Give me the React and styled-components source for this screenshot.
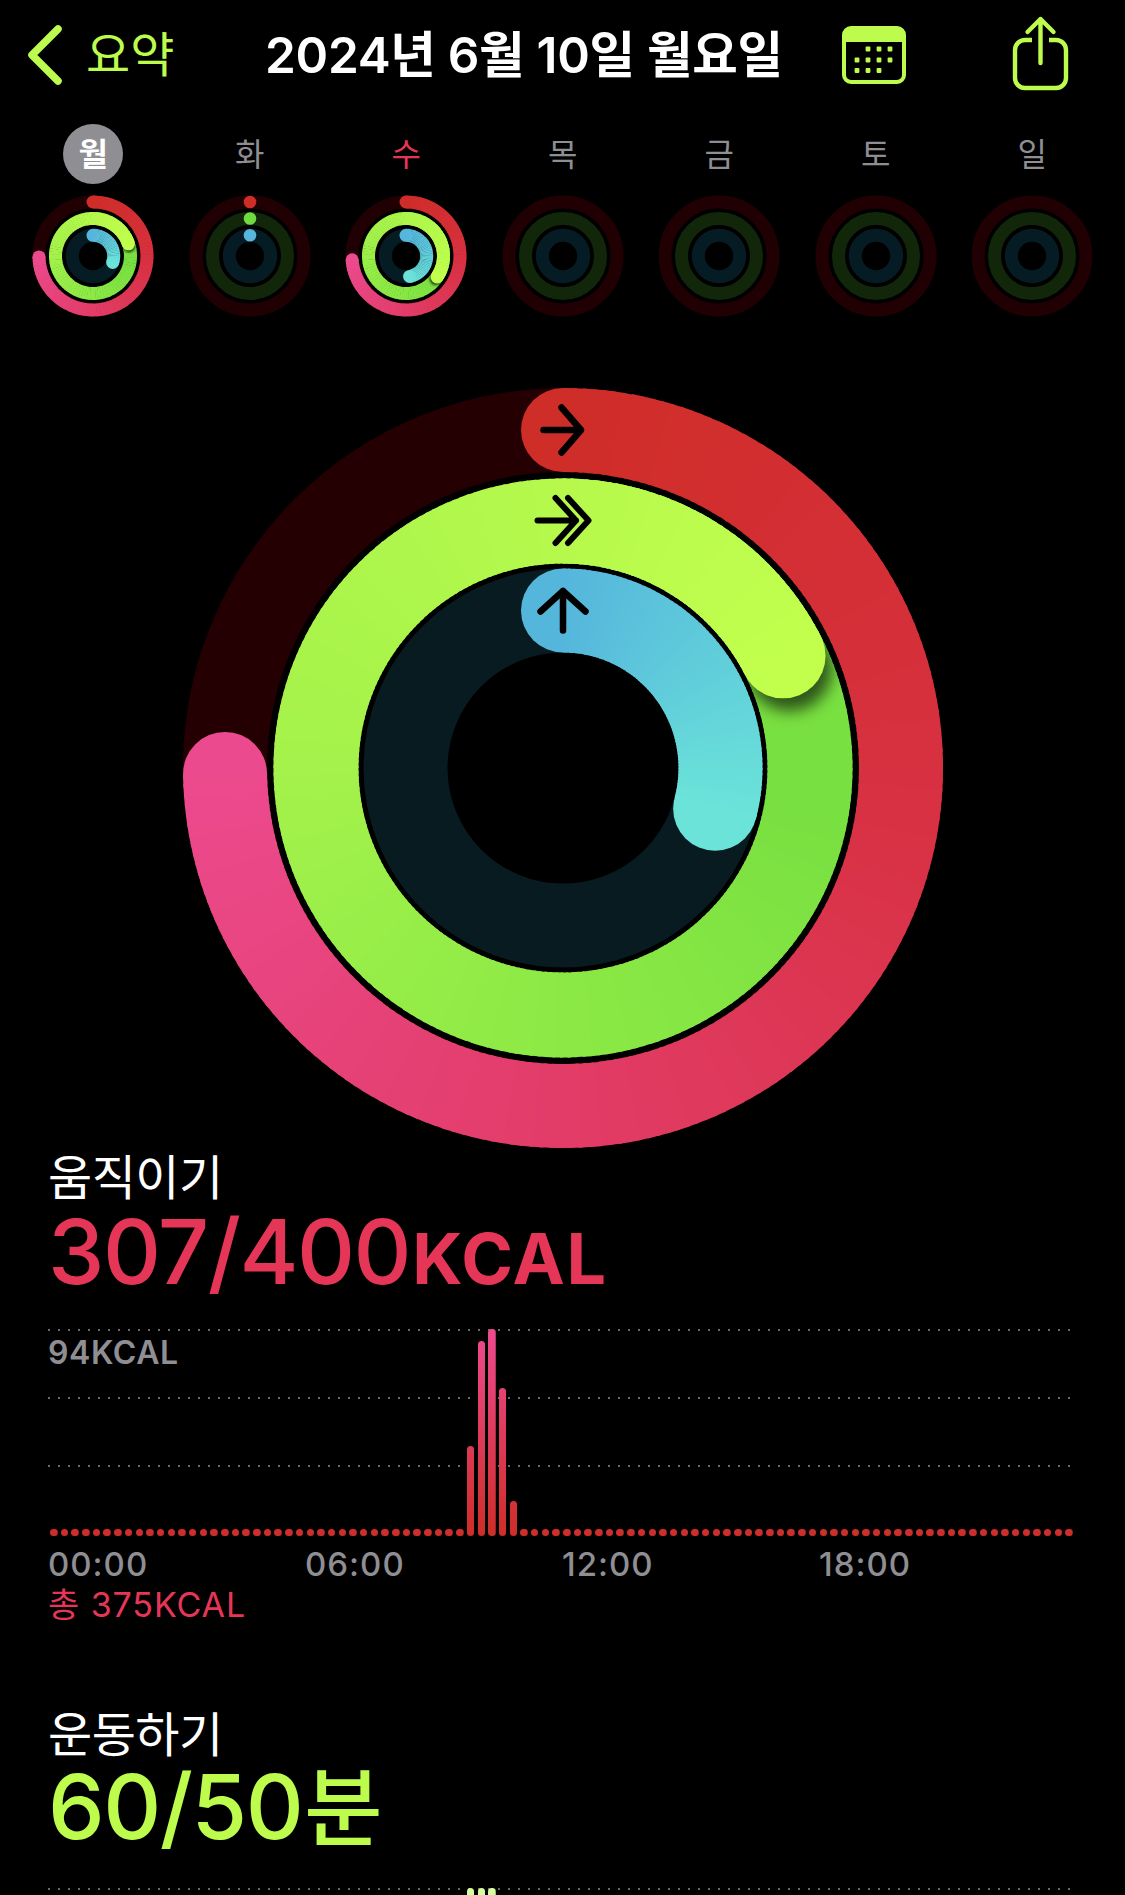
import React, { useId } from "react";
import styled, { createGlobalStyle } from "styled-components";

const LIME = "#bdfb4d";
const RED = "#e63658";
const GRAY = "#8e8e93";

const RED_STOPS = [[0, "#cf2d28"], [0.33, "#d7303f"], [0.67, "#e23c68"], [1, "#ec4a8e"]];
const GREEN_STOPS = [[0.236, "#79e041"], [0.426, "#8ce945"], [0.638, "#a4f24b"], [0.851, "#b6f94c"], [1, "#c2ff4d"]];
const BLUE_STOPS = [[0, "#55b6dc"], [1, "#6be3d9"]];

const GlobalStyle = createGlobalStyle`
  html, body {
    margin: 0;
    padding: 0;
    background: #000;
  }
  body {
    font-family: Inter, "Noto Sans CJK KR", sans-serif;
  }
`;

const hexToRgb = (hex) => [1, 3, 5].map((i) => parseInt(hex.slice(i, i + 2), 16));

function colorAt(stops, frac) {
  if (frac <= stops[0][0]) return stops[0][1];
  for (let i = 1; i < stops.length; i++) {
    if (frac <= stops[i][0]) {
      const [f0, c0] = stops[i - 1];
      const [f1, c1] = stops[i];
      const k = (frac - f0) / (f1 - f0);
      const a = hexToRgb(c0);
      const b = hexToRgb(c1);
      return `rgb(${a.map((v, n) => Math.round(v + (b[n] - v) * k)).join(",")})`;
    }
  }
  return stops[stops.length - 1][1];
}

function polar(r, deg) {
  const rad = (deg * Math.PI) / 180;
  return [r * Math.sin(rad), -r * Math.cos(rad)];
}

function Ring({ r, w, end, track, stops, shadow }) {
  const id = useId();
  const step = r > 100 ? 1.5 : 4;
  const segments = [];
  for (let t = 0; t < end; t += step) {
    const to = Math.min(t + step + 0.6, end);
    const [x0, y0] = polar(r, t);
    const [x1, y1] = polar(r, to);
    segments.push(
      <path
        key={t}
        d={`M${x0} ${y0}A${r} ${r} 0 0 1 ${x1} ${y1}`}
        stroke={colorAt(stops, (t + step / 2) / end)}
      />
    );
  }
  const [ex, ey] = polar(r, end);
  const lap = end > 360 ? Math.floor(segments.length * ((end - 360) / end)) : 0;
  const first = segments.slice(0, segments.length - lap);
  const last = segments.slice(segments.length - lap);
  const [sx, sy] = polar(w * 0.17, end + 90);
  const endCap = <circle cx={ex} cy={ey} r={w / 2} fill={stops[stops.length - 1][1]} stroke="none" />;

  return (
    <g fill="none" strokeWidth={w}>
      <circle r={r} stroke={track} />
      <circle cx={0} cy={-r} r={w / 2} fill={stops[0][1]} stroke="none" />
      {lap > 0 && first}
      {shadow && (
        <>
          <defs>
            <filter id={`${id}b`} x="-60%" y="-60%" width="220%" height="220%">
              <feGaussianBlur stdDeviation={w * 0.09} />
            </filter>
            <mask id={`${id}m`} maskUnits="userSpaceOnUse" x={-r - w} y={-r - w} width={2 * (r + w)} height={2 * (r + w)}>
              <circle r={r} stroke="#fff" />
            </mask>
          </defs>
          <g mask={`url(#${id}m)`}>
            <circle cx={ex + sx} cy={ey + sy} r={w / 2} fill="#000" fillOpacity="0.62" stroke="none" filter={`url(#${id}b)`} />
          </g>
        </>
      )}
      {endCap}
      {lap > 0 ? last : first}
    </g>
  );
}

function BigRings() {
  return (
    <svg width="764" height="764" viewBox="-382 -382 764 764">
      <Ring r={338} w={84} end={269} track="#240003" stops={RED_STOPS} />
      <Ring r={247} w={85} end={423} track="#12260a" stops={GREEN_STOPS} shadow />
      <Ring r={157.5} w={84} end={105} track="#081b21" stops={BLUE_STOPS} />
      <g fill="none" stroke="#000" strokeWidth="6.5" strokeLinecap="round" strokeLinejoin="round">
        <path d="M-19.5 -338H18M-1.5 -360.5L18 -338L-1.5 -315.5" />
        <path d="M-25.5 -247.5H13M-7.5 -270L13 -247.5L-7.5 -225M5 -270L25.5 -247.5L5 -225" strokeWidth="6" />
        <path d="M0 -137.5V-177M-22.5 -156.5L0 -177L22.5 -156.5" />
      </g>
    </svg>
  );
}

function MiniRings({ red, green, blue }) {
  const radii = { red: 54, green: 37.5, blue: 20.7 };
  const tracks = { red: "#210003", green: "#12260a", blue: "#061c24" };
  const dots = { red: "#cf2d28", green: "#6fdb40", blue: "#56b6dc" };
  const isDots = red === 0 && green === 0 && blue === 0;
  return (
    <svg width="124" height="124" viewBox="-62 -62 124 124">
      {red ? (
        <>
          <Ring r={radii.red} w={13} end={red} track={tracks.red} stops={RED_STOPS} />
          <Ring r={radii.green} w={13} end={green} track={tracks.green} stops={GREEN_STOPS} shadow />
          <Ring r={radii.blue} w={13} end={blue} track={tracks.blue} stops={BLUE_STOPS} />
        </>
      ) : (
        Object.keys(radii).map((k) => (
          <g key={k}>
            <circle r={radii[k]} fill="none" stroke={tracks[k]} strokeWidth="13" />
            {isDots && <circle cy={-radii[k]} r="6.3" fill={dots[k]} />}
          </g>
        ))
      )}
    </svg>
  );
}

const CalendarIcon = () => (
  <svg width="64" height="58" viewBox="0 0 64 58">
    <rect x="2" y="2" width="60" height="54" rx="7" fill="none" stroke={LIME} strokeWidth="4" />
    <path d="M2 15V9a7 7 0 0 1 7-7h46a7 7 0 0 1 7 7v6z" fill={LIME} stroke={LIME} strokeWidth="2" />
    <g fill={LIME}>
      {[[26, 23], [37, 23], [48, 23], [15, 34], [26, 34], [37, 34], [48, 34], [15, 44.5], [26, 44.5], [37, 44.5]].map(([x, y]) => (
        <rect key={`${x}-${y}`} x={x - 2.4} y={y - 2.4} width="4.8" height="4.8" rx="0.8" />
      ))}
    </g>
  </svg>
);

const ShareIcon = () => (
  <svg width="60" height="78" viewBox="0 0 60 78" fill="none" stroke={LIME} strokeWidth="4.4" strokeLinecap="round" strokeLinejoin="round">
    <path d="M22 25H15a10 10 0 0 0-10 10V63a10 10 0 0 0 10 10H46a10 10 0 0 0 10-10V35a10 10 0 0 0-10-10H39" strokeLinecap="butt" />
    <path d="M30.5 4V48M17.5 17L30.5 4L43.5 17" />
  </svg>
);

const Page = styled.div`
  width: 1125px;
  height: 1895px;
  overflow: hidden;
  background: #000;
  color: #fff;
`;

const Header = styled.header`
  height: 110px;
  display: flex;
  align-items: center;
  padding-left: 28px;
`;

const Back = styled.div`
  width: 237px;
  display: flex;
  align-items: center;
  gap: 24px;
  color: ${LIME};
  font-size: 48px;
  line-height: 56px;
`;

const Title = styled.h1`
  margin: 0;
  width: 577px;
  font-size: 49.5px;
  line-height: 56px;
  font-weight: 600;
  letter-spacing: -0.3px;
  white-space: nowrap;
`;

const ShareSlot = styled.div`
  margin-left: 104px;
  margin-top: -2px;
  display: flex;
`;

const Week = styled.div`
  display: grid;
  grid-template-columns: repeat(7, 156.5px);
  padding: 14px 15px 0;
`;

const Day = styled.div`
  display: flex;
  flex-direction: column;
  align-items: center;
  gap: 10px;
`;

const DayLabel = styled.div`
  width: 60px;
  height: 60px;
  box-sizing: border-box;
  padding-bottom: 4px;
  border-radius: 50%;
  display: flex;
  align-items: center;
  justify-content: center;
  font-size: 32px;
  font-weight: ${(p) => (p.$selected ? 700 : 400)};
  color: ${(p) => (p.$selected ? "#fff" : p.$today ? RED : GRAY)};
  background: ${(p) => (p.$selected ? GRAY : "transparent")};
`;

const RingSlot = styled.div`
  display: flex;
  justify-content: center;
  padding-top: 68px;
  padding-left: 1px;
`;

const Section = styled.section`
  padding: 0 53px 0 48px;
`;

const Name = styled.h2`
  margin: ${(p) => p.$top}px 0 0;
  font-size: 48px;
  line-height: 56px;
  font-weight: 400;
  letter-spacing: -0.5px;
`;

const Figure = styled.div`
  display: flex;
  align-items: baseline;
  margin-top: ${(p) => p.$top || 0}px;
  color: ${(p) => p.$color};
  font-size: 90px;
  line-height: 92px;
  font-weight: 500;
  letter-spacing: -1.5px;
`;

const Unit = styled.span`
  font-size: ${(p) => p.$size}px;
  font-weight: ${(p) => p.$weight};
  letter-spacing: 1.5px;
  margin-left: 2px;
`;

const Chart = styled.div`
  position: relative;
  height: 207px;
  margin-top: ${(p) => p.$top}px;
`;

const GridRow = styled.div`
  height: 68px;
  box-sizing: border-box;
  padding-top: 7px;
  background: repeating-linear-gradient(90deg, #6a6a6a 0 2px, transparent 2px 10px) top left / 100% 2px no-repeat;
`;

const YLabel = styled.div`
  color: ${GRAY};
  font-size: 32px;
  line-height: 34px;
  font-weight: 600;
  letter-spacing: 0.6px;
`;

const Bars = styled.div`
  position: absolute;
  left: 2px;
  right: -2px;
  top: 0;
  bottom: 0;
  display: flex;
  align-items: flex-end;
  justify-content: space-between;
`;

const Bar = styled.div`
  width: 7.5px;
  height: ${(p) => p.$h}px;
  border-radius: 3.75px;
  background: linear-gradient(0deg, ${(p) => p.$from}, ${(p) => p.$to}) bottom / 100% 207px no-repeat;
`;

const Hours = styled.div`
  display: grid;
  grid-template-columns: repeat(4, 257px);
  margin-top: 9px;
  color: ${GRAY};
  font-size: 33px;
  line-height: 38px;
  font-weight: 500;
  letter-spacing: 1px;
`;

const Total = styled.div`
  color: ${RED};
  font-size: 34px;
  line-height: 38px;
  margin-top: 3px;
  letter-spacing: 0.9px;
`;

const DAYS = [
  { label: "월", selected: true, rings: { red: 269, green: 431, blue: 108 } },
  { label: "화", rings: { red: 0, green: 0, blue: 0 } },
  { label: "수", today: true, rings: { red: 266, green: 484, blue: 170 } },
  { label: "목" },
  { label: "금" },
  { label: "토" },
  { label: "일" },
];

const MOVE = { 39: 90, 40: 195, 41: 207, 42: 148, 43: 35 };
const EXERCISE = { 39: 207, 40: 207, 41: 207 };

function BarRow({ data, from, to, dots }) {
  return (
    <Bars>
      {Array.from({ length: 96 }, (_, i) => (
        <Bar key={i} $h={data[i] || (dots ? 7.5 : 0)} $from={from} $to={to} />
      ))}
    </Bars>
  );
}

export default function App() {
  return (
    <Page>
      <GlobalStyle />
      <Header>
        <Back>
          <svg width="34" height="60" viewBox="0 0 34 60" fill="none" stroke={LIME} strokeWidth="7.5" strokeLinecap="round" strokeLinejoin="round">
            <path d="M30 4L4 30L30 56" />
          </svg>
          요약
        </Back>
        <Title>2024년 6월 10일 월요일</Title>
        <CalendarIcon />
        <ShareSlot>
          <ShareIcon />
        </ShareSlot>
      </Header>

      <Week>
        {DAYS.map((d) => (
          <Day key={d.label}>
            <DayLabel $selected={d.selected} $today={d.today}>{d.label}</DayLabel>
            <MiniRings {...(d.rings || {})} />
          </Day>
        ))}
      </Week>

      <RingSlot>
        <BigRings />
      </RingSlot>

      <Section>
        <Name $top={0}>움직이기</Name>
        <Figure $color={RED}>
          307/400<Unit $size={70} $weight={700}>KCAL</Unit>
        </Figure>
        <Chart $top={24}>
          <GridRow><YLabel>94KCAL</YLabel></GridRow>
          <GridRow />
          <GridRow />
          <BarRow data={MOVE} from="#cf2d28" to="#ee4a90" dots />
        </Chart>
        <Hours>
          <span>00:00</span>
          <span>06:00</span>
          <span>12:00</span>
          <span>18:00</span>
        </Hours>
        <Total>총 375KCAL</Total>
      </Section>

      <Section>
        <Name $top={83}>운동하기</Name>
        <Figure $color={LIME} $top={-2}>
          60/50<Unit $size={85} $weight={500}>분</Unit>
        </Figure>
        <Chart $top={33}>
          <GridRow />
          <BarRow data={EXERCISE} from="#7fe442" to="#d8ffa0" />
        </Chart>
      </Section>
    </Page>
  );
}
